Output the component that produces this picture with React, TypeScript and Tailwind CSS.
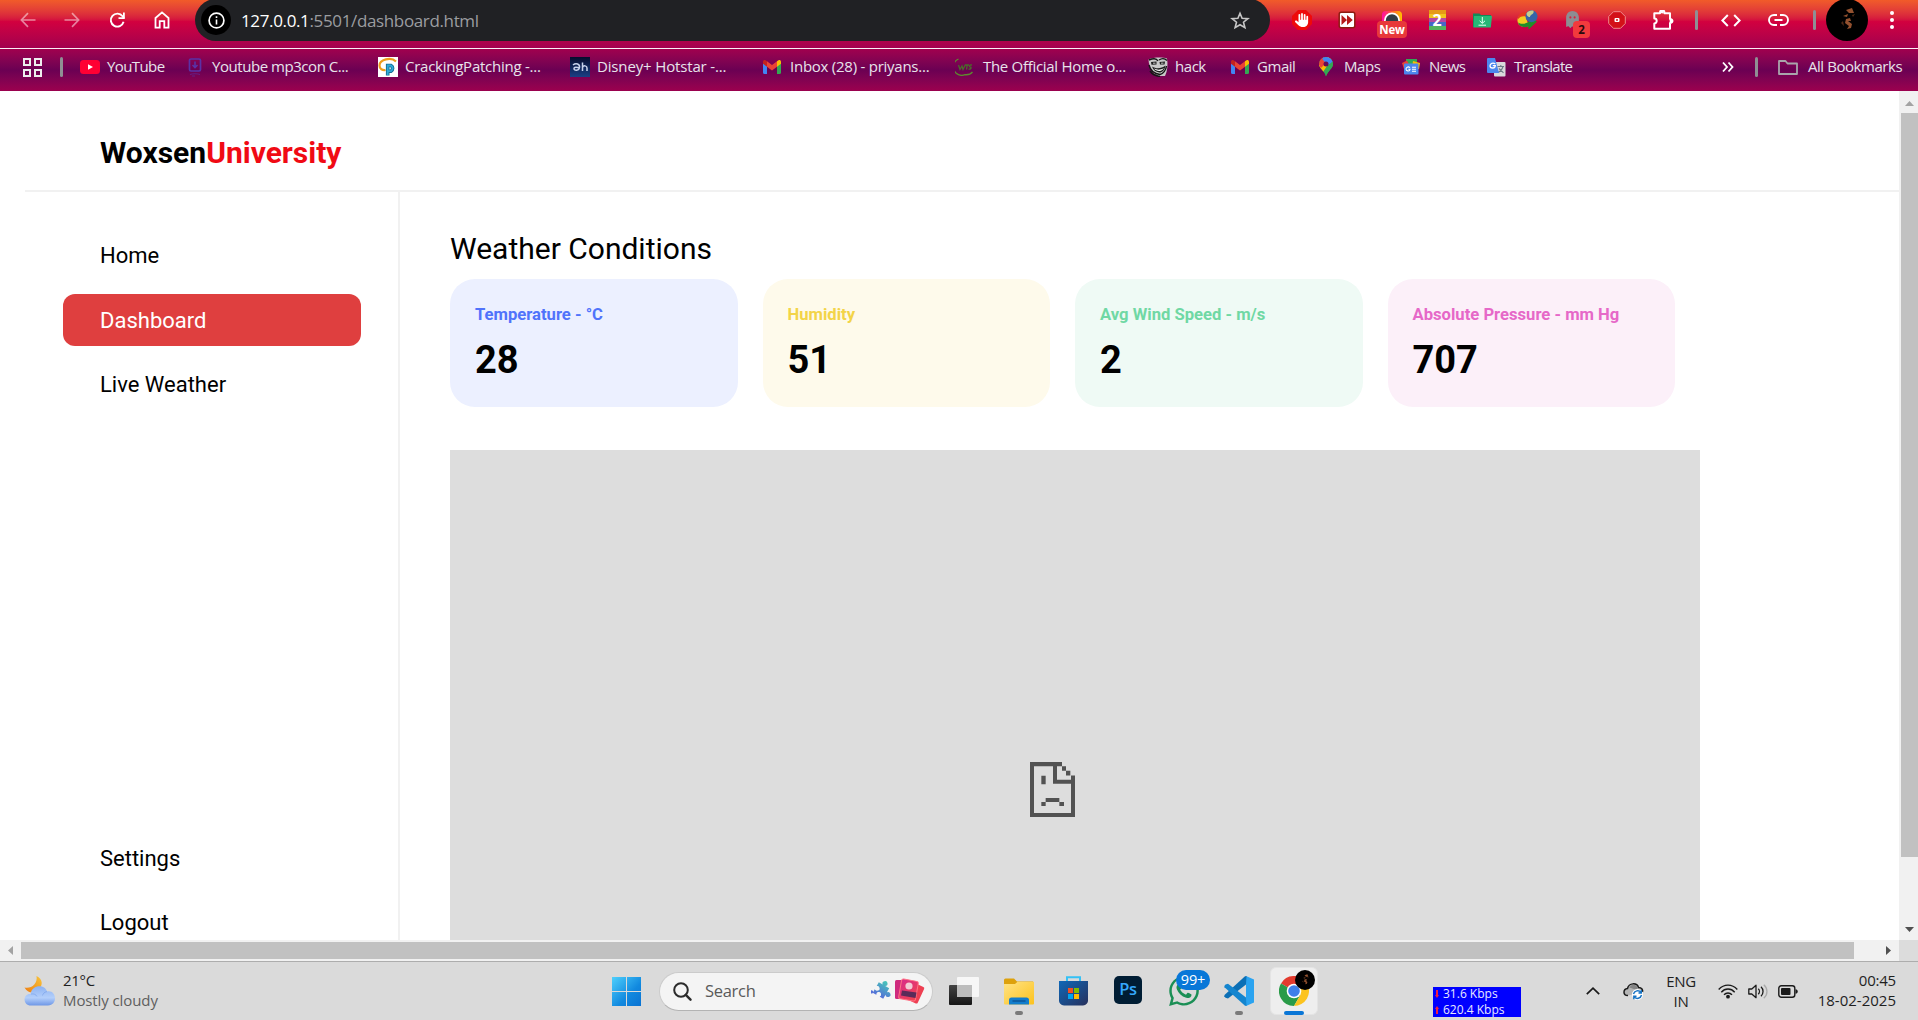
import type { ReactNode } from "react";
import { FaWhatsapp, FaHand, FaGhost } from "react-icons/fa6";

const UI = "font-['Open_Sans','Noto_Sans',sans-serif]";

/* ---------- toolbar icons ---------- */

const Arrow = ({ flip = false }: { flip?: boolean }) => (
  <svg width="16" height="16" viewBox="0 0 16 16" className={flip ? "rotate-180" : ""}>
    <path d="M15.5 8H2M8 1.2 1.4 8 8 14.8" fill="none" stroke="#fff" strokeOpacity=".5" strokeWidth="1.7" />
  </svg>
);

const Reload = () => (
  <svg width="17" height="17" viewBox="0 0 17 17">
    <path d="M14.6 9.8A6.5 6.5 0 1 1 13.6 4.3L15 6" fill="none" stroke="#fff" strokeWidth="1.9" />
    <path d="M15.8.6V6.9H9.5V5.2H14V.6Z" fill="#fff" />
  </svg>
);

const House = () => (
  <svg width="16" height="18" viewBox="0 0 16 18">
    <path d="M1.5 7 8 1.4 14.500 7V16.700H10.300V10.200H5.700V16.700H1.500Z" fill="none" stroke="#fff" strokeWidth="1.8" />
  </svg>
);

const Star = () => (
  <svg width="20" height="19" viewBox="0 0 20 19">
    <path d="M10 2.200 12.100 7.200 17.900 7.600 13.500 11.200 14.900 16.700 10 13.800 5.100 16.700 6.500 11.200 2.100 7.600 7.900 7.200Z" fill="none" stroke="#c7c7c7" strokeWidth="1.600" />
  </svg>
);

const AdBlock = () => (
  <div className="flex size-5 items-center justify-center">
    <svg width="20" height="20" viewBox="0 0 20 20" className="absolute">
      <path d="M6 0H14L20 6V14L14 20H6L0 14V6Z" fill="#ee0a0a" />
    </svg>
    <FaHand className="relative size-[14px] text-white" />
  </div>
);

const FastForward = () => (
  <svg width="18" height="18" viewBox="0 0 18 18">
    <rect x="1.200" y="1.200" width="15.600" height="15.600" rx="2" fill="#fff" stroke="#8d1c10" strokeWidth="1.500" />
    <path d="M3.500 4 9 9 3.500 14ZM9 4 14.800 9 9 14Z" fill="#b51a1a" />
  </svg>
);

const Camera = () => (
  <div className="relative h-5 w-5">
    <svg width="20" height="20" viewBox="0 0 20 20">
      <defs>
        <linearGradient id="cam" x1="0" x2="1">
          <stop offset="0" stopColor="#ff0ea8" />
          <stop offset=".5" stopColor="#ff5a2a" />
          <stop offset="1" stopColor="#ffc400" />
        </linearGradient>
      </defs>
      <rect y="1" width="20" height="18" rx="4" fill="url(#cam)" />
      <circle cx="10" cy="10.500" r="8" fill="#fff" />
      <circle cx="10" cy="10.500" r="6.200" fill="#333c46" />
    </svg>
    <span className="absolute -left-[5px] top-[11px] flex h-[17px] w-[30px] items-center justify-center rounded-[4px] bg-[#e8383a] text-[11.500px] font-bold leading-none tracking-[-0.2px] text-white">
      New
    </span>
  </div>
);

const RainbowTwo = () => (
  <div className="relative flex h-5 w-[17px] flex-col overflow-hidden">
    <i className="h-1 bg-[#e69a16]" />
    <i className="h-1 bg-[#f1c51c]" />
    <i className="h-1 bg-[#b54aa0]" />
    <i className="h-1 bg-[#4767c7]" />
    <i className="h-1 bg-[#54b35f]" />
    <b className="absolute inset-0 text-center text-[16px] leading-5 text-white">2</b>
  </div>
);

const GreenFolder = () => (
  <svg width="19" height="16" viewBox="0 0 19 16">
    <path d="M0 1.500H6.500L8 3H18V15H0Z" fill="#128a59" />
    <path d="M1 4H19L17.800 15.500H.5Z" fill="#27b877" />
    <path d="M9.300 5V11M6.600 8.800 9.300 11.400 12 8.800M5.500 13.200H13" fill="none" stroke="#e5fff2" strokeWidth="1" />
  </svg>
);

const Idm = () => (
  <svg width="21" height="20" viewBox="0 0 21 20">
    <path d="M9 4C4 3 0 7 .5 11C1 16 6 18 12 16L9 8Z" fill="#f2cd22" />
    <path d="M9 2.500C4 1.500 .5 5.500 .8 9.500C2.500 6.500 6 5.500 9 6.500Z" fill="#e43a20" />
    <path d="M1 12.500C2 17 7 18 11.500 16.500V19.500L20 11.500 11.500 8V12C8 14 4 14.500 1 12.500Z" fill="#1f8e2a" />
    <circle cx="14.500" cy="6.200" r="6" fill="#3565a8" />
    <path d="M9.500 3.500C11 1 14 .2 16.500 .8C17.500 4.500 13 4.500 13 7C11.500 7.500 9.500 6 9.500 3.500Z" fill="#c3cf8f" />
  </svg>
);

const Ghost = () => (
  <div className="relative h-5 w-5">
    <FaGhost className="absolute left-[3px] top-[1px] h-[17px] w-[15px] text-[#8d8d92]" />
    <span className="absolute left-[11px] top-[11px] flex h-[17px] w-[17px] items-center justify-center rounded-[4px] bg-[#f23a3d] text-[11.500px] font-bold leading-none text-[#2a0a0c]">
      2
    </span>
  </div>
);

const RedOctagon = () => (
  <svg width="18" height="18" viewBox="0 0 18 18">
    <path d="M5.500.7H12.500L17.300 5.500V12.500L12.500 17.300H5.500L.7 12.500V5.500Z" fill="#d31118" stroke="#ee8c8c" strokeWidth="1" />
    <rect x="6.500" y="7" width="5" height="4" rx="1" fill="#fff" />
    <circle cx="9" cy="9" r="1" fill="#d31118" />
  </svg>
);

const Puzzle = () => (
  <svg width="21" height="20" viewBox="0 0 21 20" className="ml-[2px]">
    <path d="M1.300 3.200H7V2.500A2.200 2.200 0 0 1 11.400 2.500V3.200H17V9A2 2 0 0 1 17 13V18.700H1.300V13.400A2.300 2.300 0 0 0 1.300 8.600Z" fill="none" stroke="#fff" strokeWidth="2" strokeLinejoin="round" />
    <circle cx="9.200" cy="1.800" r="1.700" fill="#fff" />
    <circle cx="18.500" cy="11" r="2" fill="#fff" />
  </svg>
);

const Code = () => (
  <svg width="20" height="13" viewBox="0 0 20 13">
    <path d="M6.800 1 1.400 6.500 6.800 12M13.200 1 18.600 6.500 13.200 12" fill="none" stroke="#fff" strokeWidth="2" />
  </svg>
);

const Chain = () => (
  <svg width="21" height="12" viewBox="0 0 21 12">
    <path d="M9 1H6A5 5 0 0 0 6 11H9M12 1H15A5 5 0 0 1 15 11H12M6.500 6H14.500" fill="none" stroke="#fff" strokeWidth="1.900" />
  </svg>
);

const Avatar = ({ className }: { className: string }) => (
  <svg viewBox="0 0 42 42" className={className}>
    <circle cx="21" cy="21" r="21" fill="#000" />
    <path d="M20 11 26 9 28 14 23 14ZM17 17 22 15 21 18ZM24 19 20 20 19 24 23 27 21 30 25 29 26 25 22 22 25 22Z" fill="#93512f" />
    <path d="M26 16 29 15 27 18ZM15 24 17 22 18 27Z" fill="#4f2a18" />
  </svg>
);

const Divider = () => <i className="h-5 w-[3px] rounded-full bg-[#8f8f94]" />;

/* ---------- bookmark icons ---------- */

const YouTube = () => (
  <svg width="20" height="14" viewBox="0 0 20 14">
    <rect width="20" height="14" rx="3.500" fill="#ff0033" />
    <path d="M8 4.200 13 7 8 9.800Z" fill="#fff" />
  </svg>
);

const Mp3 = () => (
  <svg width="14" height="20" viewBox="0 0 14 20" className="mb-px">
    <rect x="1.500" y="2" width="11" height="12" rx="1.500" fill="none" stroke="#5a32a6" strokeWidth="1.700" />
    <path d="M7 4.500V10M4.500 8 7 10.500 9.500 8" fill="none" stroke="#5a32a6" strokeWidth="1.600" />
    <path d="M2 17.500C4 16.500 10 16.500 12 17.500M4 19H7" fill="none" stroke="#5a32a6" strokeOpacity=".6" />
  </svg>
);

const Cracking = () => (
  <svg width="20" height="20" viewBox="0 0 20 20">
    <rect width="20" height="20" fill="#fff" />
    <path d="M18 4.500C13 -.5 1.500 2.500 1.500 8.500C1.500 12 4.500 13.500 7.500 13" fill="none" stroke="#ee9d1c" strokeWidth="2.200" />
    <path d="M9.700 18.500V8.500H13A3.300 3.300 0 0 1 13 14.200H10" fill="none" stroke="#136d92" strokeWidth="3.600" />
    <path d="M9.700 18V8.500H13A3.300 3.300 0 0 1 13 14.200H10" fill="none" stroke="#2fa9d8" strokeWidth="1.800" />
  </svg>
);

const Hotstar = () => (
  <svg width="20" height="20" viewBox="0 0 20 20">
    <defs>
      <linearGradient id="hs" x2="0" y2="1">
        <stop offset="0" stopColor="#060c2c" />
        <stop offset="1" stopColor="#1b3f85" />
      </linearGradient>
    </defs>
    <rect width="20" height="20" fill="url(#hs)" />
    <path d="M3 8C6 5.500 10 7 9.500 10.500C9 14 4 14 4 11.500C4 10 7 9.800 9 11M12.500 5.500V14M12.500 10.500C13.500 8 17 8.500 17 11V14" fill="none" stroke="#c8d3ec" strokeWidth="1.500" />
  </svg>
);

const GmailMark = () => (
  <svg width="18" height="14" viewBox="0 0 18 14">
    <path d="M0 2V12.500A1.500 1.500 0 0 0 1.500 14H4V5Z" fill="#4285f4" />
    <path d="M18 2V12.500A1.500 1.500 0 0 1 16.500 14H14V5Z" fill="#34a853" />
    <path d="M4 1.200 9 5 14 1.200V6.700L9 10.500 4 6.700Z" fill="#ea4335" />
    <path d="M0 2C0 0 2 -.4 3.300.7L4 1.200V6.700L0 3.700Z" fill="#c5221f" />
    <path d="M18 2C18 0 16 -.4 14.700.7L14 1.200V6.700L18 3.700Z" fill="#fbbc04" />
  </svg>
);

const Wts = () => (
  <svg width="18" height="18" viewBox="0 0 18 18">
    <path d="M3.500 1A8.200 8.200 0 0 0 10 16.700C13 17 16 15.800 17.500 14" fill="none" stroke="#5d8a2e" strokeWidth="1.300" />
    <path d="M3.500 7 5 11.500 7 8 8 11.500 10.500 6.500M10 7H14M12.200 7 11.500 11.500M17 7C14 6.500 14 9 15.500 9.200C17 9.500 15.500 11.800 13.500 11" fill="none" stroke="#4b6a2a" strokeWidth="1.300" />
  </svg>
);

const Troll = () => (
  <svg width="20" height="20" viewBox="0 0 20 20">
    <path d="M.5 2.500C5 0 15 0 19 1.500C20 7 19.500 14 17 19H10C5 17 1 12 .5 2.500Z" fill="#c9c9c9" />
    <path d="M1 3C6 .8 9 2 10 4M11 3C14 1 17 1.500 19 3.500M2 14C4 17 8 19 12 19.500M1 8C2.500 14 7 17 12 17.500C15 17 18 13 18.500 9" fill="none" stroke="#161616" strokeWidth="1.400" />
    <path d="M3 5 8.500 4.500V7.500L3.500 7.800ZM11.500 5 17 4.500 16.500 7.500H12Z" fill="#1c1c1c" />
    <path d="M4 9.500C8 12 13 12 17.500 8.500C17 13 14 15.500 11.500 15.500C8 15 5 13 4 9.500Z" fill="#1c1c1c" />
    <path d="M6 11.500C9 13.200 13 13 16 11C15 13 13 14 11.500 14C9 13.800 7 13 6 11.500ZM5 5.800H7.500V6.600H5ZM13 5.800H15.500V6.600H13Z" fill="#fff" />
  </svg>
);

const MapPin = () => (
  <svg width="14" height="20" viewBox="0 0 14 20">
    <defs>
      <clipPath id="pin">
        <path d="M7 0A7 7 0 0 0 0 7C0 11.500 5 13 7 19.500C9 13 14 11.500 14 7A7 7 0 0 0 7 0Z" />
      </clipPath>
    </defs>
    <g clipPath="url(#pin)">
      <rect width="14" height="20" fill="#34a853" />
      <path d="M0 15V8L9 0H14L4 15Z" fill="#fbbc04" />
      <path d="M0 0H5L8 5 2 11 0 8Z" fill="#ea4335" />
      <path d="M3 0H14V5L9 8 4 3Z" fill="#4285f4" />
      <path d="M8 10 14 4V12L6 20Z" fill="#34a853" />
    </g>
    <circle cx="7" cy="7" r="2.500" fill="#6a0a53" />
  </svg>
);

const NewsIcon = () => (
  <svg width="18" height="16" viewBox="0 0 18 16">
    <rect x="4" width="11" height="6" fill="#34a853" />
    <path d="M0 4 5 1.500 9 9 2 10Z" fill="#ea4335" />
    <path d="M11 2 18 4 17 10 10 9Z" fill="#fbbc04" />
    <rect x="2" y="4.500" width="14.500" height="11" rx="1" fill="#4c86ee" />
    <path d="M8 8.700C6 7 4 8.500 4 10C4 12 7.500 13 8 10.300H6.300M10 8.200H14M10 10.200H14M10 12.200H14" fill="none" stroke="#fff" strokeWidth="1.100" />
  </svg>
);

const TranslateIcon = () => (
  <svg width="19" height="19" viewBox="0 0 19 19">
    <rect x="7" y="4" width="11.500" height="14.500" rx="1" fill="#d9d9dc" />
    <path d="M10.500 8.500H17M13.800 7V8.500M16 8.500C15 12 12 14 10.500 14.500M12 10.500 16.500 14.800" fill="none" stroke="#6d7a86" strokeWidth="1.100" />
    <path d="M1 0H8L12 15H1A1 1 0 0 1 0 14V1A1 1 0 0 1 1 0Z" fill="#4b87ee" />
    <path d="M8.300 6C6 4 3 5.500 3 7.700C3 10.500 8 11 8.300 7.700H5.800" fill="none" stroke="#fff" strokeWidth="1.300" />
  </svg>
);

type Bookmark = { label: string; icon: ReactNode; box: string; gap: string; text: string };

const bookmarks: Bookmark[] = [
  { label: "YouTube", icon: <YouTube />, box: "w-[108px]", gap: "w-[27px]", text: "tracking-[-0.6px]" },
  { label: "Youtube mp3con C...", icon: <Mp3 />, box: "w-[190px]", gap: "w-[24px]", text: "tracking-[-0.45px]" },
  { label: "CrackingPatching -...", icon: <Cracking />, box: "w-[192px]", gap: "w-[27px]", text: "tracking-[-0.25px]" },
  { label: "Disney+ Hotstar -...", icon: <Hotstar />, box: "w-[193px]", gap: "w-[27px]", text: "tracking-[-0.15px]" },
  { label: "Inbox (28) - priyans...", icon: <GmailMark />, box: "w-[192px]", gap: "w-[27px]", text: "tracking-[-0.25px]" },
  { label: "The Official Home o...", icon: <Wts />, box: "w-[193px]", gap: "w-[28px]", text: "tracking-[-0.3px]" },
  { label: "hack", icon: <Troll />, box: "w-[83px]", gap: "w-[27px]", text: "tracking-[-0.45px]" },
  { label: "Gmail", icon: <GmailMark />, box: "w-[88px]", gap: "w-[26px]", text: "tracking-[-0.45px]" },
  { label: "Maps", icon: <MapPin />, box: "w-[83px]", gap: "w-[25px]", text: "tracking-[-0.45px]" },
  { label: "News", icon: <NewsIcon />, box: "w-[85px]", gap: "w-[27px]", text: "tracking-[-0.5px]" },
  { label: "Translate", icon: <TranslateIcon />, box: "w-[90px]", gap: "w-[27px]", text: "tracking-[-0.75px]" },
];

const extensions: ReactNode[] = [
  <AdBlock />, <FastForward />, <Camera />, <RainbowTwo />, <GreenFolder />, <Idm />, <Ghost />, <RedOctagon />, <Puzzle />,
];

function BrowserChrome() {
  return (
    <header className={`h-[91px] shrink-0 overflow-hidden ${UI}`}>
      <div className="flex h-12 items-center bg-linear-to-b from-[#f15b29] via-[#d2003f] via-45% to-[#a2004e] pb-[8px]">
        <div className="flex w-[195px] items-center pl-[6px]">
          <span className="flex w-[44px] justify-center"><Arrow /></span>
          <span className="flex w-[44px] justify-center"><Arrow flip /></span>
          <span className="flex w-[46px] justify-center"><Reload /></span>
          <span className="flex w-[44px] justify-center"><House /></span>
        </div>
        <div className="flex h-[42px] w-[1075px] items-center rounded-full bg-[#202124] pl-[6px] pr-5">
          <span className="flex size-[30px] items-center justify-center rounded-full bg-black">
            <svg width="17" height="17" viewBox="0 0 17 17">
              <circle cx="8.500" cy="8.500" r="7.400" fill="none" stroke="#fff" strokeWidth="1.700" />
              <path d="M7.700 4.300H9.300V6H7.700ZM7.700 7.500H9.300V12.500H7.700Z" fill="#fff" />
            </svg>
          </span>
          <span className="ml-[10px] flex-1 text-[17px] leading-none tracking-[-0.36px] text-[#9b9da0]">
            <span className="text-white">127.0.0.1</span>:5501/dashboard.html
          </span>
          <Star />
        </div>
        <div className="ml-[9.5px] flex">
          {extensions.map((icon, i) => (
            <span key={i} className="relative flex h-10 w-[45px] items-center justify-center">{icon}</span>
          ))}
        </div>
        <div className="ml-[10px] flex items-center">
          <Divider />
          <span className="ml-[23px] flex"><Code /></span>
          <span className="ml-[27px] flex"><Chain /></span>
          <span className="ml-[24px] flex"><Divider /></span>
          <Avatar className="ml-[10px] size-[42px]" />
          <span className="ml-[22px] flex flex-col gap-[3px]">
            <i className="size-1 rounded-full bg-white" />
            <i className="size-1 rounded-full bg-white" />
            <i className="size-1 rounded-full bg-white" />
          </span>
        </div>
      </div>
      <div className="h-px bg-[#fbeef4]" />
      <div className="flex h-[42px] items-center bg-linear-to-b from-[#a1004e] via-[#6b0053] to-[#9c004e] pb-[6px] text-[15px] leading-none text-[#e9e3ea]">
        <svg width="19" height="19" viewBox="0 0 19 19" className="ml-[23px]">
          <path d="M1 1H7V7H1ZM12 1H18V7H12ZM1 12H7V18H1ZM12 12H18V18H12Z" fill="none" stroke="#eee" strokeWidth="2" />
        </svg>
        <span className="ml-[18px] mr-[17px] flex"><Divider /></span>
        {bookmarks.map((b, i) => (
          <span key={i} className={`flex shrink-0 items-center whitespace-nowrap ${b.box}`}>
            <span className={`flex shrink-0 ${b.gap}`}>{b.icon}</span>
            <span className={`pb-[2px] ${b.text}`}>{b.label}</span>
          </span>
        ))}
        <svg width="12" height="12" viewBox="0 0 12 12" className="ml-[145px]">
          <path d="M1 1.500 5 6 1 10.500M6.500 1.500 10.500 6 6.500 10.500" fill="none" stroke="#fff" strokeWidth="1.800" />
        </svg>
        <span className="ml-[21px] mr-[20px] flex"><Divider /></span>
        <svg width="20" height="15" viewBox="0 0 20 15">
          <path d="M1 1H7.500L9.500 3.500H19V14H1Z" fill="none" stroke="#a9a5ab" strokeWidth="1.800" strokeLinejoin="round" />
        </svg>
        <span className="ml-[10px] whitespace-nowrap pb-[2px] tracking-[-0.45px]">All Bookmarks</span>
      </div>
    </header>
  );
}

/* ---------- dashboard page ---------- */

const NavItem = ({ label, active = false }: { label: string; active?: boolean }) => (
  <a className={`flex h-[52px] items-center rounded-xl pl-[37px] text-[22px] ${active ? "bg-[#df3f3f] text-white" : "text-black"}`}>
    {label}
  </a>
);

const cards = [
  { label: "Temperature - °C", value: "28", bg: "bg-[#ecf0ff]", fg: "text-[#5073fb]" },
  { label: "Humidity", value: "51", bg: "bg-[#fefaeb]", fg: "text-[#f3d448]" },
  { label: "Avg Wind Speed - m/s", value: "2", bg: "bg-[#effaf5]", fg: "text-[#70d8a4]" },
  { label: "Absolute Pressure - mm Hg", value: "707", bg: "bg-[#fcf0f9]", fg: "text-[#e668c8]" },
];

const SadPage = () => (
  <svg width="45" height="55" viewBox="0 0 135 164" preserveAspectRatio="none" fill="#525252">
    <path d="M0 0H96V13H81V53H123V40H135V164H0ZM12 13V152H123V65H69V13Z" fillRule="evenodd" />
    <path d="M96 13H108V26H96ZM108 26H121V40H108ZM34 41H47V66H34ZM47 107H88V119H47ZM34 119H47V131H34ZM88 119H102V131H88Z" />
  </svg>
);

function Dashboard() {
  return (
    <div className="flex h-[849px] w-[1899px] flex-col overflow-hidden bg-white pl-[25px] font-['Roboto',sans-serif] text-black">
      <div className="flex h-[101px] shrink-0 items-center border-b-2 border-[#f1f1f1] pl-[75px] pt-[25px] text-[30px] font-bold leading-none">
        Woxsen<span className="text-[#f00a14]">University</span>
      </div>
      <div className="flex min-h-0 flex-1">
        <aside className="flex w-[375px] shrink-0 flex-col justify-between border-r-2 border-[#f1f1f1] pl-[38px] pr-[37px] pt-[37px]">
          <nav className="flex flex-col">
            <NavItem label="Home" />
            <div className="mb-3 mt-[13px]"><NavItem label="Dashboard" active /></div>
            <NavItem label="Live Weather" />
          </nav>
          <nav className="-mb-[8px] flex flex-col gap-[12px]">
            <NavItem label="Settings" />
            <NavItem label="Logout" />
          </nav>
        </aside>
        <main className="ml-[50px] flex w-[1250px] flex-col">
          <h1 className="mt-[41px] h-[46px] text-[30px] leading-[32px]">Weather Conditions</h1>
          <div className="mr-[25px] grid h-[128px] shrink-0 grid-cols-4 gap-[25px]">
            {cards.map((c) => (
              <section key={c.label} className={`rounded-[25px] pl-[25px] pt-[26px] font-bold ${c.bg}`}>
                <div className={`text-[16.640px] leading-5 ${c.fg}`}>{c.label}</div>
                <div className="mt-[12px] text-[38px] leading-[46px]">{c.value}</div>
              </section>
            ))}
          </div>
          <div className="mt-[43px] flex flex-1 justify-center bg-[#dddddd] pr-[45px] pt-[312px]">
            <SadPage />
          </div>
        </main>
      </div>
    </div>
  );
}

const Tri = ({ d, fill }: { d: string; fill: string }) => (
  <svg width="9" height="9" viewBox="0 0 9 9"><path d={d} fill={fill} /></svg>
);

function Viewport() {
  return (
    <div className="grid shrink-0 grid-cols-[1899px_19px] grid-rows-[849px_21px]">
      <Dashboard />
      <div className="flex flex-col items-center bg-[#f1f1f1] pl-[2px]">
        <span className="flex h-[22px] items-center pt-[3px]"><Tri d="M0 7H9L4.500 2Z" fill="#a3a3a3" /></span>
        <i className="h-[744px] w-[17px] bg-[#c1c1c1]" />
        <span className="mt-auto flex h-[22px] items-center"><Tri d="M0 2H9L4.500 7Z" fill="#505050" /></span>
      </div>
      <div className="flex items-center bg-[#f1f1f1]">
        <span className="flex w-[21px] justify-center"><Tri d="M7 0V9L2 4.500Z" fill="#a3a3a3" /></span>
        <i className="h-[17px] w-[1833px] bg-[#c1c1c1]" />
        <span className="ml-auto flex w-[21px] justify-center"><Tri d="M2 0V9L7 4.500Z" fill="#505050" /></span>
      </div>
      <div className="bg-[#dcdcdc]" />
    </div>
  );
}

/* ---------- taskbar ---------- */

const WeatherIcon = () => (
  <svg width="32" height="30" viewBox="0 0 32 30">
    <defs>
      <linearGradient id="cl" x2="0" y2="1">
        <stop offset="0" stopColor="#8cb2f2" />
        <stop offset=".6" stopColor="#b3cffb" />
        <stop offset="1" stopColor="#6e97e6" />
      </linearGradient>
      <linearGradient id="mo" x1="1" x2="0" y2="1">
        <stop offset="0" stopColor="#f8c53a" />
        <stop offset="1" stopColor="#ee7d12" />
      </linearGradient>
    </defs>
    <path d="M12.500 0C19 3 19 9 15 13C11 18 4 18 .5 11.500C7 13 14 8 12.500 0Z" fill="url(#mo)" />
    <path d="M7 29.500C-1.500 29.500-1.500 17.500 6.500 18C8 8 21 8 23 15.500C33 13.500 34 29.500 24 29.500Z" fill="url(#cl)" />
    <path d="M7 18C10 17.500 12 18.500 13 20.500M23 15.500C20 16 19 18 18.500 19.500" fill="none" stroke="#7ba3ea" strokeOpacity=".7" />
  </svg>
);

const WinLogo = () => (
  <svg width="29" height="29" viewBox="0 0 29 29">
    <defs>
      <linearGradient id="wn" x2="1" y2="1">
        <stop offset="0" stopColor="#4fd0fc" />
        <stop offset=".6" stopColor="#1189df" />
        <stop offset="1" stopColor="#0a72d2" />
      </linearGradient>
    </defs>
    <path d="M0 0H14V14H0ZM15 0H29V14H15ZM0 15H14V29H0ZM15 15H29V29H15Z" fill="url(#wn)" />
  </svg>
);

const SearchArt = () => (
  <svg width="54" height="27" viewBox="0 0 54 27">
    <defs>
      <linearGradient id="pz" x2="0" y2="1">
        <stop offset="0" stopColor="#48c7b8" />
        <stop offset="1" stopColor="#5470d8" />
      </linearGradient>
      <linearGradient id="cd" x2="1" y2="1">
        <stop offset="0" stopColor="#d82b8a" />
        <stop offset="1" stopColor="#f2454d" />
      </linearGradient>
    </defs>
    <g transform="rotate(30 10 12.500)">
      <path
        d="M4 6.500H8.600A2.500 2.500 0 1 1 11.400 6.500H16V11.100A2.500 2.500 0 1 1 16 13.900V18.500H11.600A2.300 2.300 0 1 0 8.400 18.500H4V14A2.300 2.300 0 1 0 4 11Z"
        fill="url(#pz)"
      />
      <circle cx="10" cy="17.200" r="2.200" fill="#f4f4f4" />
      <circle cx="5" cy="12.500" r="2.200" fill="#f4f4f4" />
      <circle cx="2.500" cy="18.500" r="1.600" fill="#5470d8" />
    </g>
    <rect x="24" y="2" width="15" height="19" rx="1.500" fill="#cf2b7e" />
    <rect x="38" y="6" width="13" height="18" rx="1.500" fill="#ee3f52" transform="rotate(25 44 14)" />
    <rect x="29" y="2" width="17" height="20" rx="2" fill="url(#cd)" stroke="#ff7487" strokeWidth="1" transform="rotate(10 37 12)" />
    <path d="M31 12.500 45.500 14.500 44.500 20 30 17.500Z" fill="#5a2b59" />
    <circle cx="38" cy="8" r="3.600" fill="#f2cbd5" />
  </svg>
);

const TaskView = () => (
  <svg width="30" height="28" viewBox="0 0 30 28">
    <defs>
      <linearGradient id="tv" x2="0" y2="1">
        <stop offset="0" stopColor="#444" />
        <stop offset="1" stopColor="#161616" />
      </linearGradient>
    </defs>
    <rect y="8" width="23" height="20" rx="1" fill="url(#tv)" />
    <rect x="8" width="22" height="20" rx="1" fill="#fff" fillOpacity=".78" />
    <rect x="8" y="8" width="15" height="12" fill="#bdbdbd" />
  </svg>
);

const Explorer = () => (
  <svg width="30" height="27" viewBox="0 0 30 27">
    <defs>
      <linearGradient id="fx" x2="1" y2="1">
        <stop offset="0" stopColor="#ffe385" />
        <stop offset="1" stopColor="#fcc21d" />
      </linearGradient>
    </defs>
    <path d="M0 2A1.500 1.500 0 0 1 1.500.5H10L13 3.500H29V8H0Z" fill="#dda10c" />
    <path d="M0 6H11L13.500 3.700H30V25.500A1 1 0 0 1 29 26.500H1A1 1 0 0 1 0 25.500Z" fill="url(#fx)" />
    <path d="M5 26.500V22A2.500 2.500 0 0 1 7.500 19.500H22.500A2.500 2.500 0 0 1 25 22V26.500Z" fill="#127dcc" />
    <path d="M8.500 23H21.500" stroke="#0a4c8a" strokeWidth="1.200" />
  </svg>
);

const Store = () => (
  <svg width="29" height="30" viewBox="0 0 29 30">
    <defs>
      <linearGradient id="st" x2="1" y2="1">
        <stop offset="0" stopColor="#0f68b8" />
        <stop offset="1" stopColor="#27305c" />
      </linearGradient>
    </defs>
    <path d="M8 6V1.200H21V6" fill="none" stroke="#35c1f5" strokeWidth="2" />
    <path d="M0 5H29V24A5 5 0 0 1 24 29.500H5A5 5 0 0 1 0 24Z" fill="url(#st)" />
    <rect x="9" y="12" width="5" height="5" fill="#f25022" />
    <rect x="15" y="12" width="5" height="5" fill="#7fba00" />
    <rect x="9" y="18" width="5" height="5" fill="#00a4ef" />
    <rect x="15" y="18" width="5" height="5" fill="#ffb900" />
  </svg>
);

const VsCode = () => (
  <svg width="30" height="30" viewBox="0 0 30 30">
    <path d="M22 0 30 3.500V26.500L22 30Z" fill="#2aa3f0" />
    <path d="M22 8.500 4 22.500 1.500 21.800 .3 20.300 .5 19 21 .3 22.500 0Z" fill="#0b6fb5" />
    <path d="M22 21.500 4 7.700 1.500 8.400 .3 9.900 .5 11.200 21 29.700 22.500 30Z" fill="#1485cf" />
  </svg>
);

const Chrome = () => (
  <svg width="30" height="30" viewBox="0 0 30 30">
    <path d="M15 15 2 7.500A15 15 0 0 1 28 7.500Z" fill="#e33b2e" />
    <path d="M15 15 2 7.500A15 15 0 0 0 15 30L21.500 18.700Z" fill="#2a9b48" />
    <path d="M15 8H28.300A15 15 0 0 1 15 30L21.500 18.700Z" fill="#fcc31e" />
    <circle cx="15" cy="15" r="7.300" fill="#fff" />
    <circle cx="15" cy="15" r="5.800" fill="#3e7fe8" />
  </svg>
);

const TaskApp = ({ children, mark }: { children: ReactNode; mark?: string }) => (
  <span className="relative flex h-full w-[55px] items-center justify-center">
    {children}
    {mark && <i className={`absolute bottom-[5px] h-1 rounded-full ${mark}`} />}
  </span>
);

const CloudSync = () => (
  <svg width="21" height="18" viewBox="0 0 21 18">
    <path d="M5 13.500C-.5 13.500 0 7 4.500 6.500C6 .5 14 .5 15.500 5.500C19 5.500 20 8 19.500 10" fill="#b5b5b5" stroke="#1a1a1a" strokeWidth="1.500" />
    <path d="M6 6C8 5 10 8 14 7L15 6C13 1.500 8 1.500 6 6Z" fill="#858585" />
    <circle cx="14.500" cy="12.500" r="5.500" fill="#fff" />
    <path d="M10.500 12A4.200 4.200 0 0 1 18 10.500M18.500 13A4.200 4.200 0 0 1 11 14.700M18.300 8V11H15.500M10.800 17.200V14.300H13.500" fill="none" stroke="#1673c4" strokeWidth="1.400" />
  </svg>
);

const Wifi = () => (
  <svg width="20" height="15" viewBox="0 0 20 15">
    <path d="M.7 5.500C6-.3 14-.3 19.300 5.500M3.300 8.200C7 4 13 4 16.700 8.200M6 10.800C8.300 8.300 11.700 8.300 14 10.800" fill="none" stroke="#1a1a1a" strokeWidth="1.400" />
    <circle cx="10" cy="12.700" r="1.900" fill="#1a1a1a" />
  </svg>
);

const Speaker = () => (
  <svg width="20" height="15" viewBox="0 0 20 15">
    <path d="M.8 5H3.800L8 1.300V13.700L3.800 10H.8Z" fill="none" stroke="#1a1a1a" strokeWidth="1.300" strokeLinejoin="round" />
    <path d="M10.300 4.800C11.800 6.300 11.800 8.700 10.300 10.200M13 2.800C15.700 5.300 15.700 9.700 13 12.200" fill="none" stroke="#1a1a1a" strokeWidth="1.300" />
    <path d="M15.800.8C20 4.500 20 10.500 15.800 14.200" fill="none" stroke="#aaa" strokeWidth="1.300" />
  </svg>
);

const Battery = () => (
  <svg width="20" height="13" viewBox="0 0 20 13">
    <rect x=".8" y=".8" width="16" height="11.400" rx="2.500" fill="none" stroke="#1a1a1a" strokeWidth="1.400" />
    <rect x="3" y="3" width="9.500" height="7" rx="1" fill="#1a1a1a" />
    <path d="M17.500 4.300C20.500 4.300 20.500 8.700 17.500 8.700Z" fill="#1a1a1a" />
  </svg>
);

function Taskbar() {
  return (
    <footer className={`flex h-[59px] shrink-0 items-center overflow-hidden border-t border-[#adadad] bg-[#dadada] text-[15px] leading-5 tracking-[-0.3px] text-[#1f1f1f] ${UI}`}>
      <div className="flex w-[612px] items-center whitespace-nowrap pl-6">
        <WeatherIcon />
        <div className="-mt-[2px] ml-[7px]">
          <div>21°C</div>
          <div className="tracking-[-0.1px] text-[#5f5f5f]">Mostly cloudy</div>
        </div>
      </div>
      <WinLogo />
      <div className="ml-[18px] flex h-[39px] w-[274px] items-center rounded-full border border-[#cbcbcb] border-b-[#b3b3b3] bg-[#f4f4f4] pl-[13px] pr-[7px]">
        <svg width="19" height="19" viewBox="0 0 19 19">
          <circle cx="8" cy="8" r="6.800" fill="none" stroke="#2b2b2b" strokeWidth="2" />
          <path d="M12.800 12.800 17.500 17.700" stroke="#2b2b2b" strokeWidth="2.400" strokeLinecap="round" />
        </svg>
        <span className="ml-[13px] flex-1 text-[16.500px] text-[#5a5a5a]">Search</span>
        <SearchArt />
      </div>
      <div className="ml-[3px] flex h-full">
        <TaskApp><TaskView /></TaskApp>
        <TaskApp mark="w-2 bg-[#7a7a7a]"><Explorer /></TaskApp>
        <TaskApp><Store /></TaskApp>
        <TaskApp>
          <span className="mb-[3px] mr-px flex size-[28px] items-center justify-center rounded-[5px] bg-[#001d34] text-[16.500px] font-semibold leading-none text-[#35a7fb]">Ps</span>
        </TaskApp>
        <TaskApp>
          <FaWhatsapp className="size-[34px] text-[#1b8f55]" />
          <span className="absolute left-[20px] top-[8px] flex h-[20px] w-[34px] items-center justify-center rounded-full bg-[#0877d8] text-[14.500px] leading-none tracking-[-0.1px] text-white">99+</span>
        </TaskApp>
        <TaskApp mark="w-2 bg-[#7a7a7a]"><VsCode /></TaskApp>
        <TaskApp mark="w-5 bg-[#0a76d6]">
          <span className="flex size-12 items-center justify-center rounded-md border border-[#e4e4e4] bg-[#eeeeee]"><Chrome /></span>
          <Avatar className="absolute left-[29px] top-[8px] size-5" />
        </TaskApp>
      </div>
      <div className="ml-[112px] mt-[22px] flex h-[30px] w-[88px] flex-col gap-[2px] whitespace-nowrap bg-[#0000ff] text-[12px] font-medium leading-[14px] tracking-[0px] text-[#e8e8ff]">
        <div className="flex items-center gap-[4px] pl-[2px]">
          <svg width="4" height="8" viewBox="0 0 4 8"><path d="M1 0H3V5H4L2 8 0 5H1Z" fill="#f02040" /></svg>31.6 Kbps
        </div>
        <div className="flex items-center gap-[4px] pl-[2px]">
          <svg width="4" height="8" viewBox="0 0 4 8"><path d="M1 8H3V3H4L2 0 0 3H1Z" fill="#f02040" /></svg>620.4 Kbps
        </div>
      </div>
      <svg width="14" height="8" viewBox="0 0 14 8" className="ml-[65px]">
        <path d="M.8 7.200 7 1.200 13.200 7.200" fill="none" stroke="#1a1a1a" strokeWidth="1.700" />
      </svg>
      <span className="ml-[23px] flex"><CloudSync /></span>
      <div className="-mt-px ml-[12px] w-[50px] text-center">
        <div>ENG</div>
        <div>IN</div>
      </div>
      <div className="ml-[12px] flex items-center gap-[10px]">
        <Wifi /><Speaker /><Battery />
      </div>
      <div className="ml-auto mr-[22px] mt-[-3px] text-right">
        <div className="tracking-[-0.2px]">00:45</div>
        <div className="tracking-[0px]">18-02-2025</div>
      </div>
    </footer>
  );
}

export default function App() {
  return (
    <div className="flex h-[1020px] w-[1918px] flex-col overflow-hidden bg-white">
      <BrowserChrome />
      <Viewport />
      <Taskbar />
    </div>
  );
}
